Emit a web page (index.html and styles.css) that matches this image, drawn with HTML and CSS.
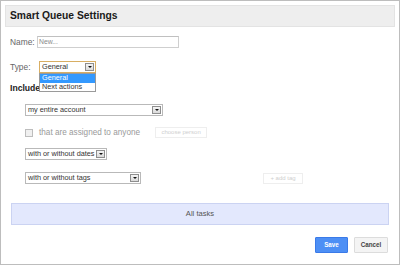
FILE: index.html
```html
<!DOCTYPE html>
<html>
<head>
<meta charset="utf-8">
<link rel="stylesheet" href="styles.css">
</head>
<body>
<div class="frame">
  <div class="header">Smart Queue Settings</div>
  <div class="form">
    <div class="row name-row">
      <span class="label label-name">Name:</span>
      <div class="input">New...</div>
    </div>
    <div class="row type-row">
      <span class="label label-type">Type:</span>
      <div class="select-wrap">
        <div class="select select-focus w-type"><span class="sel-text">General</span><span class="arrow"></span></div>
        <div class="dropdown">
          <div class="opt opt-active">General</div>
          <div class="opt">Next actions</div>
        </div>
      </div>
    </div>
    <div class="include">Include</div>
    <div class="sub">
      <div class="select w-account sub-first"><span class="sel-text">my entire account</span><span class="arrow"></span></div>
      <div class="row check-row">
        <span class="checkbox"></span>
        <span class="muted">that are assigned to anyone</span>
        <span class="ghost-btn choose">choose person</span>
      </div>
      <div class="select w-dates dates"><span class="sel-text">with or without dates</span><span class="arrow"></span></div>
      <div class="row tags-row">
        <div class="select w-tags"><span class="sel-text">with or without tags</span><span class="arrow"></span></div>
        <span class="ghost-btn add-tag">+ add tag</span>
      </div>
    </div>
  </div>
  <div class="all-tasks">All tasks</div>
  <div class="actions">
    <button class="btn btn-save">Save</button>
    <button class="btn btn-cancel">Cancel</button>
  </div>
</div>
</body>
</html>
```

FILE: styles.css
```css
html, body {
  margin: 0;
  padding: 0;
  background: #fff;
}
body {
  font-family: "Liberation Sans", Arial, sans-serif;
  color: #222;
}
.frame {
  width: 400px;
  height: 265px;
  box-sizing: border-box;
  border: 1px solid #bdbdbd;
  padding: 4px;
}
.header {
  height: 22px;
  box-sizing: border-box;
  background: #eeeeee;
  border: 1px solid #e3e3e3;
  padding-left: 4px;
  font-size: 10.3px;
  font-weight: bold;
  line-height: 20px;
  color: #1a1a1a;
}
.form {
  padding-left: 5px;
}
.row {
  display: flex;
  align-items: center;
}
.label {
  font-size: 8.4px;
  color: #666;
}
.label-name { width: 27px; }
.label-type { width: 29px; }
.name-row {
  margin-top: 9px;
  height: 12px;
}
.input {
  width: 142px;
  height: 12px;
  box-sizing: border-box;
  border: 1px solid #cfcfcf;
  border-top-color: #c0c0c0;
  font-size: 6.8px;
  line-height: 10px;
  padding-left: 1px;
  color: #8a8a8a;
}
.type-row {
  margin-top: 13px;
  height: 12px;
}
.select-wrap {
  position: relative;
}
.select {
  height: 12px;
  box-sizing: border-box;
  border: 1px solid #b9b9b9;
  background: #fff;
  display: flex;
  align-items: center;
  justify-content: space-between;
  padding-left: 2px;
  padding-right: 1px;
}
.sel-text {
  font-size: 7.3px;
  line-height: 10px;
  color: #333;
  white-space: nowrap;
}
.arrow {
  width: 9px;
  height: 8px;
  box-sizing: border-box;
  border: 1px solid #8e8e8e;
  background: linear-gradient(#f4f4f4, #dadada);
  display: flex;
  align-items: center;
  justify-content: center;
}
.arrow::after {
  content: "";
  border-left: 2px solid transparent;
  border-right: 2px solid transparent;
  border-top: 2px solid #111;
}
.select-focus {
  border-color: #d8ae63;
}
.w-type { width: 57px; }
.w-account { width: 138px; }
.w-dates { width: 82px; }
.w-tags { width: 116px; }
.dropdown {
  position: absolute;
  top: 12px;
  left: 0;
  width: 57px;
  box-sizing: border-box;
  border: 1px solid #9a9a9a;
  background: #fff;
  z-index: 2;
}
.opt {
  height: 8.5px;
  font-size: 7.3px;
  line-height: 8.5px;
  padding-left: 2px;
  color: #333;
}
.opt-active {
  background: #3399ff;
  color: #fff;
}
.include {
  margin-top: 10px;
  height: 10px;
  line-height: 10px;
  font-size: 8.6px;
  font-weight: bold;
  color: #222;
}
.sub {
  padding-left: 15px;
}
.sub-first {
  margin-top: 11px;
}
.check-row {
  margin-top: 11px;
  height: 11px;
}
.checkbox {
  width: 8px;
  height: 8px;
  box-sizing: border-box;
  border: 1px solid #bdbdbd;
  background: #f0f0f0;
}
.muted {
  margin-left: 6px;
  font-size: 8.2px;
  color: #9a9a9a;
  white-space: nowrap;
}
.ghost-btn {
  height: 11px;
  box-sizing: border-box;
  border: 1px solid #eeeeee;
  font-size: 6px;
  line-height: 9px;
  color: #cfcfcf;
  text-align: center;
  white-space: nowrap;
}
.choose {
  width: 52px;
  margin-left: 15px;
}
.dates {
  margin-top: 10px;
}
.tags-row {
  margin-top: 11px;
  height: 13px;
  align-items: flex-end;
}
.add-tag {
  width: 40px;
  margin-left: 122px;
}
.all-tasks {
  margin: 19px 6px 0 6px;
  height: 22px;
  box-sizing: border-box;
  background: #e3e8fd;
  border: 1px solid #cbd3f2;
  text-align: center;
  font-size: 7.6px;
  line-height: 20px;
  color: #555;
}
.actions {
  margin-top: 12px;
  display: flex;
  justify-content: flex-end;
  gap: 6px;
  padding-right: 7px;
}
.btn {
  height: 16px;
  box-sizing: border-box;
  margin: 0;
  padding: 0;
  font-family: "Liberation Sans", Arial, sans-serif;
  font-size: 6.3px;
  font-weight: bold;
  line-height: 14px;
  border-radius: 1px;
}
.btn-save {
  width: 33px;
  background: #4d8ff5;
  border: 1px solid #3a7ae8;
  color: #fff;
}
.btn-cancel {
  width: 34px;
  background: #f4f4f4;
  border: 1px solid #dcdcdc;
  color: #444;
}
```
